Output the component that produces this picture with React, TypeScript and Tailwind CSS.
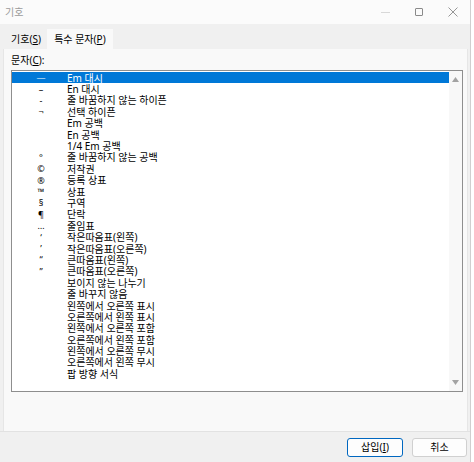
import React from "react";

const ROWS: { sym: string; name: string }[] = [
  { sym: "—", name: "Em 대시" },
  { sym: "–", name: "En 대시" },
  { sym: "-", name: "줄 바꿈하지 않는 하이픈" },
  { sym: "¬", name: "선택 하이픈" },
  { sym: "", name: "Em 공백" },
  { sym: "", name: "En 공백" },
  { sym: "", name: "1/4 Em 공백" },
  { sym: "°", name: "줄 바꿈하지 않는 공백" },
  { sym: "©", name: "저작권" },
  { sym: "®", name: "등록 상표" },
  { sym: "™", name: "상표" },
  { sym: "§", name: "구역" },
  { sym: "¶", name: "단락" },
  { sym: "…", name: "줄임표" },
  { sym: "‘", name: "작은따옴표(왼쪽)" },
  { sym: "’", name: "작은따옴표(오른쪽)" },
  { sym: "“", name: "큰따옴표(왼쪽)" },
  { sym: "”", name: "큰따옴표(오른쪽)" },
  { sym: "", name: "보이지 않는 나누기" },
  { sym: "", name: "줄 바꾸지 않음" },
  { sym: "", name: "왼쪽에서 오른쪽 표시" },
  { sym: "", name: "오른쪽에서 왼쪽 표시" },
  { sym: "", name: "왼쪽에서 오른쪽 포함" },
  { sym: "", name: "오른쪽에서 왼쪽 포함" },
  { sym: "", name: "왼쪽에서 오른쪽 무시" },
  { sym: "", name: "오른쪽에서 왼쪽 무시" },
  { sym: "", name: "팝 방향 서식" },
];

const FONT = "font-['Noto_Sans','Noto_Sans_CJK_KR',sans-serif]";

export default function App() {
  return (
    <div className={`w-[474px] h-[462px] bg-white ${FONT} text-[10px] leading-none text-black`}>
      <div className="w-[471px] h-[462px] flex flex-col border-r border-[#cfcfcf]">
        {/* 타이틀 바 */}
        <div className="h-[24px] bg-[#fbfbfb] flex items-center shrink-0">
          <span className="pl-[5px] text-[#9a9a9a]">기호</span>
          <div className="ml-auto flex items-center h-full">
            <div className="w-[34px] flex justify-center">
              <div className="w-[9px] h-px bg-[#d8d8d8]" />
            </div>
            <div className="w-[34px] flex justify-center">
              <div className="w-[8px] h-[8px] border border-[#8a8a8a] rounded-[1px]" />
            </div>
            <div className="w-[34px] flex justify-center">
              <svg width="10" height="10" viewBox="0 0 10 10">
                <path d="M0.5 0.5L9.5 9.5M9.5 0.5L0.5 9.5" stroke="#8a8a8a" strokeWidth="0.9" />
              </svg>
            </div>
          </div>
        </div>

        {/* 탭 */}
        <div className="h-[25px] bg-[#f0f0f0] flex items-end pl-[5px] shrink-0">
          <div className="h-[20px] px-[6px] flex items-center">
            기호(<span className="underline">S</span>)
          </div>
          <div className="h-[20px] w-[66px] bg-[#f9f9f9] flex items-center justify-center">
            특수 문자(<span className="underline">P</span>)
          </div>
        </div>

        {/* 패널 */}
        <div className="flex-1 bg-[#f0f0f0] flex">
          <div className="ml-[3px] w-[465px] bg-[#f9f9f9] border-x border-[#e6e6e6] flex flex-col">
            <div className="h-[21px] flex items-center pl-[7px]">
              문자(<span className="underline">C</span>):
            </div>
            <div className="ml-[7px] w-[452px] h-[322px] border border-[#8e8e8e] bg-white flex">
              <div className="flex-1 pt-px">
                {ROWS.map((r, i) => (
                  <div
                    key={i}
                    className={`h-[11.4px] flex items-center ${i === 0 ? "bg-[#0078d7] text-white" : ""}`}
                  >
                    <span className="w-[55px] pl-[3px] text-center text-[9px]">{r.sym}</span>
                    <span>{r.name}</span>
                  </div>
                ))}
              </div>
              <div className="w-[13px] bg-[#f8f8f8] flex flex-col items-center justify-between py-[6px]">
                <svg width="7" height="5" viewBox="0 0 7 5">
                  <path d="M3.5 0L7 5H0Z" fill="#a3a3a3" />
                </svg>
                <svg width="7" height="5" viewBox="0 0 7 5">
                  <path d="M0 0H7L3.5 5Z" fill="#a3a3a3" />
                </svg>
              </div>
            </div>
          </div>
        </div>

        {/* 하단 버튼 */}
        <div className="h-[31px] bg-[#f0f0f0] border-t border-[#e2e2e2] flex items-center justify-end gap-[9px] pr-[3px] shrink-0">
          <button className="w-[56px] h-[19px] bg-[#fdfdfd] border border-[#0067c0] rounded-[3px] flex items-center justify-center">
            삽입(<span className="underline">I</span>)
          </button>
          <button className="w-[55px] h-[19px] bg-[#fdfdfd] border border-[#d0d0d0] rounded-[3px] flex items-center justify-center">
            취소
          </button>
        </div>
      </div>
    </div>
  );
}
